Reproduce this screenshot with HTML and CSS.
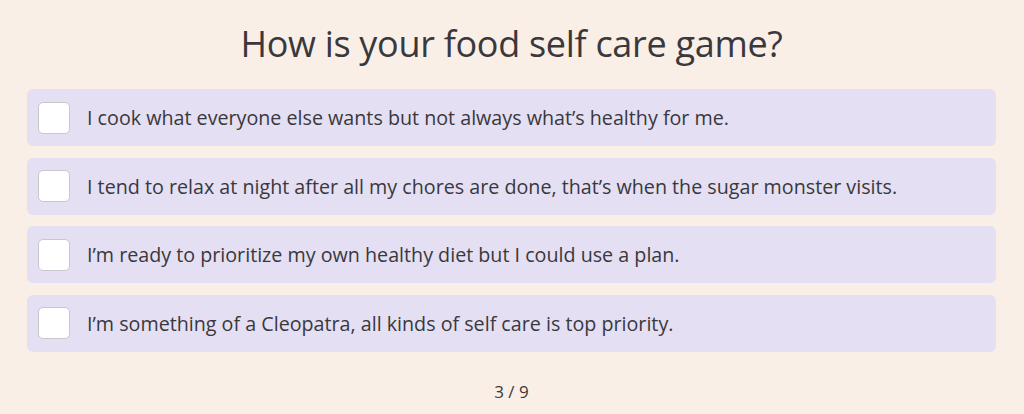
FILE: index.html
```html
<!DOCTYPE html>
<html>
<head>
<meta charset="utf-8">
<link rel="stylesheet" href="styles.css">
</head>
<body>
<main class="quiz">
  <h1 class="title">How is your food self care game?</h1>
  <ul class="options">
    <li class="option"><span class="box"></span><span class="label">I cook what everyone else wants but not always what’s healthy for me.</span></li>
    <li class="option"><span class="box"></span><span class="label">I tend to relax at night after all my chores are done, that’s when the sugar monster visits.</span></li>
    <li class="option"><span class="box"></span><span class="label">I’m ready to prioritize my own healthy diet but I could use a plan.</span></li>
    <li class="option"><span class="box"></span><span class="label">I’m something of a Cleopatra, all kinds of self care is top priority.</span></li>
  </ul>
  <div class="progress">3 / 9</div>
</main>
</body>
</html>
```
FILE: styles.css
```css
html, body {
  margin: 0;
  padding: 0;
  background: #faefe7;
}
body {
  font-family: "Open Sans", sans-serif;
  color: #39383c;
}
.quiz {
  padding: 0 28px 0 27px;
  display: flex;
  flex-direction: column;
}
.title {
  margin: 0;
  height: 87px;
  padding-bottom: 2px;
  display: flex;
  align-items: center;
  justify-content: center;
  font-size: 36px;
  font-weight: 400;
  letter-spacing: -0.3px;
}
.options {
  list-style: none;
  margin: 0;
  padding: 0;
  display: flex;
  flex-direction: column;
  gap: 11.4px;
}
.option {
  height: 57.2px;
  background: #e4dff3;
  border-radius: 6px;
  display: flex;
  align-items: center;
  padding-left: 11px;
}
.box {
  width: 30px;
  height: 30px;
  background: #fff;
  border: 1px solid #c9c6cf;
  border-radius: 5px;
  flex: none;
}
.label {
  margin-left: 17px;
  font-size: 19.7px;
  letter-spacing: 0;
}
.progress {
  margin-top: 28px;
  text-align: center;
  font-size: 17px;
}
```
